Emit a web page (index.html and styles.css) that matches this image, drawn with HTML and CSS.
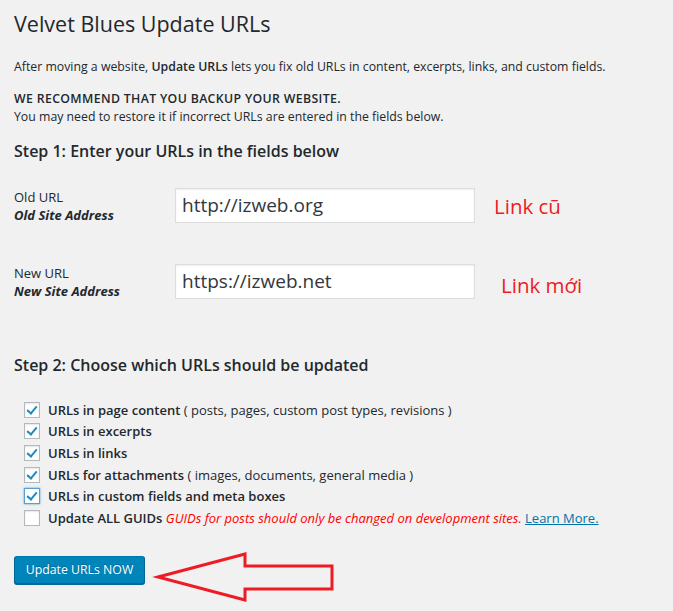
FILE: index.html
```html
<!DOCTYPE html>
<html>
<head>
<meta charset="utf-8">
<link rel="stylesheet" href="styles.css">
</head>
<body>
<div class="wrap">
  <h1 class="title">Velvet Blues Update URLs</h1>
  <p class="intro">After moving a website, <strong>Update URLs</strong> lets you fix old URLs in content, excerpts, links, and custom fields.</p>
  <p class="warn"><strong>WE RECOMMEND THAT YOU BACKUP YOUR WEBSITE.</strong><br>You may need to restore it if incorrect URLs are entered in the fields below.</p>
  <h3 class="step">Step 1: Enter your URLs in the fields below</h3>
  <div class="field">
    <div class="label">Old URL<br><em>Old Site Address</em></div>
    <div class="input">http://izweb.org</div>
    <span class="note">Link cũ</span>
  </div>
  <div class="field field2">
    <div class="label">New URL<br><em>New Site Address</em></div>
    <div class="input">https://izweb.net</div>
    <span class="note note2">Link mới</span>
  </div>
  <h3 class="step step2">Step 2: Choose which URLs should be updated</h3>
  <ul class="checks">
    <li><span class="cb on"></span><span><b>URLs in page content</b> ( posts, pages, custom post types, revisions )</span></li>
    <li><span class="cb on"></span><span><b>URLs in excerpts</b></span></li>
    <li><span class="cb on"></span><span><b>URLs in links</b></span></li>
    <li><span class="cb on"></span><span><b>URLs for attachments</b> ( images, documents, general media )</span></li>
    <li><span class="cb on focus"></span><span><b>URLs in custom fields and meta boxes</b></span></li>
    <li><span class="cb"></span><span><b>Update ALL GUIDs</b> <i class="red">GUIDs for posts should only be changed on development sites.</i> <a class="more">Learn More.</a></span></li>
  </ul>
  <div class="actions">
    <button class="btn">Update URLs NOW</button>
  </div>
</div>
<svg class="arrow" width="673" height="611" viewBox="0 0 673 611">
  <polygon points="158,577 245,554 245,566 332,566 332,589 245,589 245,600" fill="none" stroke="#ed1c24" stroke-width="3" stroke-linejoin="miter"/>
</svg>
</body>
</html>
```
FILE: styles.css
```css
html, body { margin: 0; padding: 0; }
body {
  background: #f1f1f1;
  color: #23282d;
  font-family: "Open Sans", "Noto Sans", sans-serif;
  font-size: 12.3px;
  width: 673px;
  height: 611px;
  overflow: hidden;
  position: relative;
}
.wrap { padding: 0 0 0 14px; }
.title {
  font-size: 21.5px;
  font-weight: 400;
  margin: 0;
  padding-top: 8px;
  line-height: 32px;
  color: #23282d;
}
.intro { margin: 18px 0 0; line-height: 18px; }
.intro strong { font-weight: 600; }
.warn { margin: 14px 0 0; line-height: 18px; }
.warn strong { font-weight: 600; letter-spacing: 0.35px; }
.step {
  font-size: 16px;
  font-weight: 600;
  margin: 13px 0 0;
  line-height: 24px;
}
.field {
  display: flex;
  align-items: flex-start;
  margin-top: 25px;
}
.field2 { margin-top: 40px; }
.label { width: 161px; line-height: 18px; font-size: 13px; }
.label em { font-weight: 700; font-style: italic; }
.input {
  width: 286px;
  height: 33px;
  background: #fff;
  border: 1px solid #ddd;
  box-shadow: inset 0 1px 2px rgba(0,0,0,0.07);
  font-size: 19px;
  line-height: 33px;
  padding: 0 6px;
  color: #32373c;
}
.note {
  color: #ed1c24;
  font-size: 20.5px;
  margin-left: 19px;
  line-height: 24px;
  margin-top: 6px;
}
.note2 { margin-left: 26px; margin-top: 9px; }
.step2 { margin-top: 53px; }
.checks { list-style: none; margin: 22px 0 0; padding: 0 0 0 10px; font-size: 13px; }
.checks li { display: flex; align-items: center; height: 21.6px; }
.checks b { font-weight: 600; }
.cb {
  width: 14px; height: 14px;
  border: 1px solid #b4b9be;
  background: #fff;
  margin-right: 8px;
  box-shadow: inset 0 1px 2px rgba(0,0,0,0.1);
  position: relative;
  flex: none;
}
.cb.focus { border-color: #5b9dd9; box-shadow: 0 0 2px rgba(30,140,190,0.8); }
.cb.on::after {
  content: "";
  position: absolute;
  left: 4px; top: 1px;
  width: 4px; height: 8px;
  border-right: 2.5px solid #1e8cbe;
  border-bottom: 2.5px solid #1e8cbe;
  transform: rotate(40deg);
}
.red { color: #ff0000; font-style: italic; }
.more { color: #0073aa; text-decoration: underline; }
.actions { margin-top: 27px; }
.btn {
  font-family: inherit;
  font-size: 12.3px;
  color: #fff;
  background: #0085ba;
  border: 1px solid #0073aa;
  border-color: #0073aa #006799 #006799;
  border-radius: 3px;
  box-shadow: 0 1px 0 #006799;
  text-shadow: 0 -1px 1px #006799;
  height: 28px;
  padding: 0 8px;
  width: 131px;
  line-height: 26px;
  cursor: pointer;
}
.arrow { position: absolute; left: 0; top: 0; pointer-events: none; }
```
